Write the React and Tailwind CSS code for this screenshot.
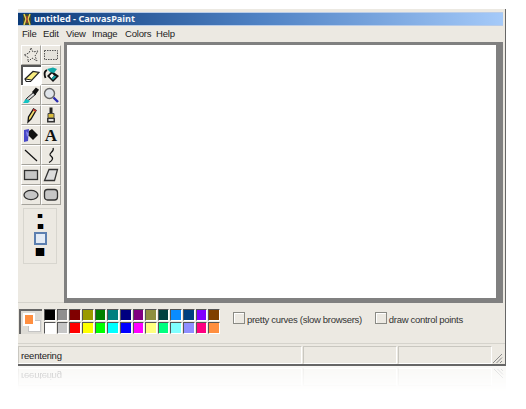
const UI = "font-['Liberation_Sans',sans-serif] tracking-[-0.2px]";

function Ico({ children }) {
  return (
    <svg width="18" height="18" viewBox="0 0 18 18" fill="none" className="block">
      {children}
    </svg>
  );
}

const tools = [
  <Ico><path d="M9 2L11 6L16 5L13 10L15 15L10 12L6 16L6 11L2 9L7 7Z" stroke="#444" strokeWidth="1" strokeDasharray="1.6 1.2" /></Ico>,
  <Ico><rect x="2.5" y="4.5" width="13" height="9" fill="#e4e2dc" stroke="#555" strokeWidth="1" strokeDasharray="1.5 1" /></Ico>,
  <Ico><path d="M2 12L10 4.5L16 5.5L8.5 13.5L3.5 14Z" fill="#f8ec80" stroke="#222" strokeWidth="1.2" /><path d="M2.5 12L8.5 13L8 14.5H3Z" fill="#fff" stroke="#222" strokeWidth="1" /></Ico>,
  <Ico><path d="M10 5L17 10L11 16L5 10Z" fill="#111" /><path d="M7.5 10L10 7.5L12 9.5L9.5 12.5Z" fill="#fff" /><path d="M12 9.5L14.5 10.5L11 14L9.5 12.5Z" fill="#17a0a0" /><path d="M5 4C2.5 5 2 8 3.5 12" stroke="#111" strokeWidth="1.8" /><path d="M5 3L11 1.5L15 3L12 7L8 6Z" fill="#12a8a8" /></Ico>,
  <Ico><path d="M3 15L5 12L12 6L14 8L7 14Z" fill="#d9d9d9" stroke="#222" strokeWidth="1" /><path d="M11 6L14 2.5L16 4L13 8Z" fill="#111" stroke="#111" strokeWidth="1.5" /><path d="M1 17L4 13L8 15L6 17Z" fill="#12c4c4" /></Ico>,
  <Ico><circle cx="7.5" cy="7.5" r="5" fill="#dfe4ea" stroke="#666" strokeWidth="1.4" /><path d="M11.5 11.5L16 16" stroke="#2a2ab0" strokeWidth="2.4" /></Ico>,
  <Ico><path d="M6 16L6.5 11L11.5 3L14 4.5L9 13Z" fill="#f3d86a" stroke="#111" strokeWidth="1.3" /><path d="M11 3.5L14 5" stroke="#c33" strokeWidth="1.5" /></Ico>,
  <Ico><rect x="7.5" y="1.5" width="3" height="6" fill="#222" /><path d="M6 7.5H12V12H6Z" fill="#d8bb3c" stroke="#444" /><rect x="5" y="12" width="8" height="4.5" fill="#333" /><rect x="6.5" y="13" width="5" height="2" fill="#ddd" /></Ico>,
  <Ico><path d="M7 5L10 3L16 9L11 14L6 9Z" fill="#111" /><path d="M2 4L7 3L6 15L2 16Z" fill="#4848c8" /><path d="M4 5L7 8L5 11Z" fill="#8f8fe8" /></Ico>,
  null,
  <Ico><path d="M3 4L15 15" stroke="#111" strokeWidth="1.2" /></Ico>,
  <Ico><path d="M11 2C13 5 7 7 8 9C9 11 12 11 10 14C9 15.5 8 16 7 16.5" stroke="#111" strokeWidth="1.2" /></Ico>,
  <Ico><rect x="2.5" y="4.5" width="13" height="9" fill="#c6c6c6" stroke="#333" strokeWidth="1.3" /></Ico>,
  <Ico><path d="M7 3.5H15.5L12.5 14.5H2.5Z" fill="#dcdcdc" stroke="#333" strokeWidth="1.3" /></Ico>,
  <Ico><ellipse cx="9" cy="9" rx="7" ry="4.7" fill="#c6c6c6" stroke="#333" strokeWidth="1.3" /></Ico>,
  <Ico><rect x="2.5" y="3.5" width="13" height="10.5" rx="3" fill="#c6c6c6" stroke="#333" strokeWidth="1.3" /></Ico>,
];

const topColors = ["#000000","#8f8f8f","#800000","#9a9a00","#008000","#008080","#000080","#800080","#8f8f40","#004040","#0a8cff","#004080","#8000ff","#804000"];
const bottomColors = ["#ffffff","#c6c6c6","#ff0000","#ffff00","#00ff00","#00ffff","#0000ff","#ff00ff","#ffff80","#00ff80","#80ffff","#8f8fff","#ff0080","#ff8f40"];

function ToolButton({ active, children }) {
  const cls = active
    ? "bg-white border-t-2 border-l-2 border-t-[#555] border-l-[#555]"
    : "bg-[#ece9e2] border-b border-r border-t border-l border-t-white border-l-white border-b-[#a5a39c] border-r-[#a5a39c]";
  return <div className={`w-5 h-5 flex items-center justify-center ${cls}`}>{children}</div>;
}

function Swatch({ color }) {
  return (
    <div
      className="h-[12px] border-t border-l border-t-[#555] border-l-[#555] border-b border-r border-b-white border-r-white"
      style={{ backgroundColor: color }}
    />
  );
}

function StatusBar({ mirrored }) {
  const cell = "h-[18px] border-t border-l border-t-[#c9c7c0] border-l-[#c9c7c0] border-b border-r border-b-white border-r-white";
  return (
    <div className={`flex h-[18px] text-[9.5px] text-[#222] ${UI} ${mirrored ? "-scale-y-100" : ""}`}>
      <div className={`${cell} w-[284px] pl-[2px] leading-[17px]`}>reentering</div>
      <div className={`${cell} w-[94px] ml-px`} />
      <div className={`${cell} w-[94px] ml-px`} />
      <div className="flex-1 flex items-end justify-end">
        <svg width="11" height="11" viewBox="0 0 11 11">
          <path d="M10 1L1 10M10 4.5L4.5 10M10 8L8 10" stroke="#8a8a8a" strokeWidth="1" />
        </svg>
      </div>
    </div>
  );
}

function Check({ label, className }) {
  return (
    <div className={`flex items-start shrink-0 ${className}`}>
      <div className="w-[12px] h-[12px] mt-[9px] bg-[#ece9e2] border border-[#8a8a84] shadow-[inset_1px_1px_0_#fff]" />
      <span className="ml-[2px] mt-[10px] text-[9.5px] leading-[14px] text-[#333] whitespace-nowrap font-['Liberation_Sans',sans-serif] tracking-[-0.3px]">{label}</span>
    </div>
  );
}

export default function App() {
  return (
    <div className="w-[526px] h-[409px] bg-white overflow-hidden pt-[9px] pl-[18px]">
      <div className="w-[488px] blur-[0.3px]">
        <div className="h-[357px] bg-[#ece9e2] border-r border-b-2 border-r-[#666] border-b-[#666] pt-[3px] flex flex-col">
          <div className="mr-[2px] h-[14px] flex items-center pl-[3px] bg-gradient-to-r from-[#0a3a78] via-[#4f82c4] to-[#a5caf9] border-y border-y-[#b9cce8]">
            <svg width="12" height="13" viewBox="0 0 12 13">
              <rect x="2" y="1" width="8" height="11" fill="#3c4a30" />
              <path d="M3 1L5 6L3 12M9 1L7 6L9 12" stroke="#e8d050" strokeWidth="1.4" fill="none" />
              <path d="M6 3V10" stroke="#c0392b" strokeWidth="1.2" />
            </svg>
            <span className="ml-[1px] font-['Noto_Sans',sans-serif] text-[9.2px] leading-[12px] font-bold text-[#f2f5fa]">untitled - CanvasPaint</span>
          </div>
          <div className={`h-[14px] mt-px flex items-center pl-[4px] text-[9.5px] text-[#222] ${UI}`}>
            <span className="w-[21px]">File</span>
            <span className="w-[23px]">Edit</span>
            <span className="w-[26px]">View</span>
            <span className="w-[33px]">Image</span>
            <span className="w-[31px]">Colors</span>
            <span>Help</span>
          </div>
          <div className="flex h-[262px] mt-px">
            <div className="w-[46px] border-b border-b-[#d5d3cc] pt-[3px] pl-[3px]">
              <div className="grid grid-cols-[20px_20px] auto-rows-[20px] w-[40px]">
                {tools.map((t, i) => (
                  <ToolButton key={i} active={i === 2}>
                    {t || <span className="font-['Liberation_Serif',serif] font-bold text-[17px] leading-none text-[#111]">A</span>}
                  </ToolButton>
                ))}
              </div>
              <div className="ml-[2px] mt-[3px] w-[34px] h-[56px] border border-[#d8d6cf] flex flex-col items-center pt-[5px]">
                <div className="w-[4px] h-[4px] bg-black shadow-[-1px_0_#d8a070,1px_0_#70a0d8]" />
                <div className="w-[5px] h-[5px] mt-[6px] bg-black shadow-[-1px_0_#d8a070,1px_0_#70a0d8]" />
                <div className="w-[9px] h-[9px] mt-[3px] bg-[#e3ebf5] border-2 border-[#5c7fb0] box-content" />
                <div className="w-[8px] h-[8px] mt-[3px] bg-black shadow-[-1px_0_#d8a070,1px_0_#70a0d8]" />
              </div>
            </div>
            <div className="w-[439px] h-full bg-[#808080] pt-[3px] pl-[3px] pr-[7px] pb-[5px] mr-[2px]">
              <div className="w-full h-full bg-white" />
            </div>
          </div>
          <div className="h-[41px] flex border-b border-b-[#d5d3cc]">
            <div className="w-[23px] h-[25px] mt-[6px] ml-px mr-[2px] shrink-0 bg-[#dedcd6] border-t-2 border-l-2 border-t-[#666] border-l-[#666] relative">
              <div className="absolute left-[7px] top-[9px] w-[13px] h-[12px] bg-white border border-[#c4c4c4]" />
              <div className="absolute left-[2px] top-[2px] w-[12px] h-[13px] bg-[#ff8f40] border-2 border-white" />
            </div>
            <div className="mt-[6px] w-[176px] h-[25px] shrink-0 grid grid-cols-14 grid-rows-[12px_12px] gap-y-px gap-x-px">
              {topColors.map((c) => <Swatch key={c} color={c} />)}
              {bottomColors.map((c) => <Swatch key={c} color={c} />)}
            </div>
            <Check label="pretty curves (slow browsers)" className="ml-[13px]" />
            <Check label="draw control points" className="ml-[13px]" />
          </div>
          <div className="mt-[2px] mr-[2px]"><StatusBar /></div>
        </div>
        <div className="h-[26px] overflow-hidden opacity-30 [mask-image:linear-gradient(to_bottom,black,transparent)]">
          <div className="bg-[#ece9e2] h-[26px] pt-[2px] pr-[2px]"><StatusBar mirrored /></div>
        </div>
      </div>
    </div>
  );
}
